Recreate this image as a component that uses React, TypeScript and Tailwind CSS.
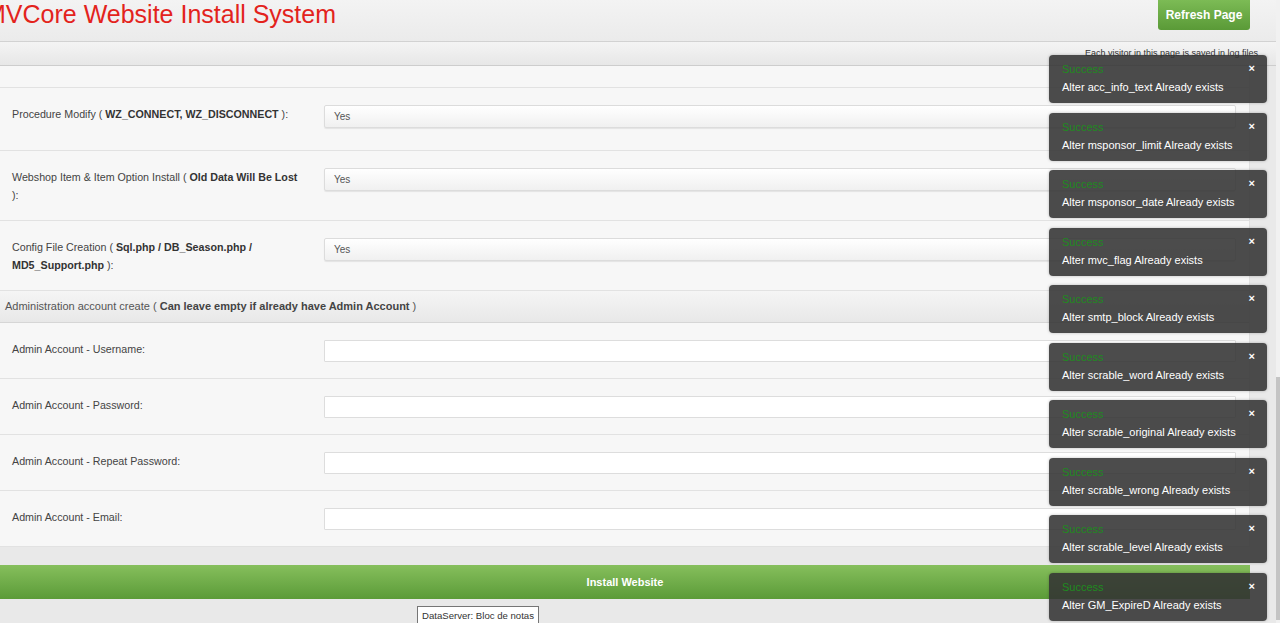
import React from "react";

const toasts = [
  "acc_info_text",
  "msponsor_limit",
  "msponsor_date",
  "mvc_flag",
  "smtp_block",
  "scrable_word",
  "scrable_original",
  "scrable_wrong",
  "scrable_level",
  "GM_ExpireD",
];

function SelectBox() {
  return (
    <div className="h-[23px] mb-[6px] flex items-center pl-[9px] text-[10px] text-[#555] bg-gradient-to-b from-[#ffffff] to-[#f0f0f0] border border-[#dcdcdc] rounded-[2px] shadow-[0_1px_1px_rgba(0,0,0,0.08)]">
      Yes
    </div>
  );
}

function InputBox() {
  return <div className="h-[22px] bg-white border border-[#dddddd] rounded-[1px]" />;
}

function Row({ label, children }: { label: React.ReactNode; children: React.ReactNode }) {
  return (
    <div className="flex pl-[12px] pr-[13px] pt-[17px] pb-[16px] border-b border-[#e2e2e2]">
      <div className="w-[291px] shrink-0 text-[10.7px] leading-[18px] text-[#444]">{label}</div>
      <div className="flex-1 ml-[21px]">{children}</div>
    </div>
  );
}

export default function App() {
  return (
    <div className="relative w-[1280px] h-[623px] overflow-hidden flex bg-[#e9e9e9] font-['Liberation_Sans',Arial,sans-serif]">
      <div className="flex-1 flex flex-col">
        {/* header */}
        <div className="h-[42px] shrink-0 flex justify-between bg-gradient-to-b from-[#f3f3f3] to-[#ebebeb] border-b border-[#d2d2d2]">
          <div className="ml-[-15px] text-[25px] leading-[28px] text-[#e3231c] whitespace-nowrap">
            MVCore Website Install System
          </div>
          <div className="mr-[26px] w-[92px] h-[30px] flex items-center justify-center rounded-b-[3px] bg-gradient-to-b from-[#7cbb55] to-[#5a9a37] text-white text-[12px] font-bold">
            Refresh Page
          </div>
        </div>
        <div className="h-[24px] shrink-0 flex items-center justify-end pr-[18px] bg-gradient-to-b from-[#f4f4f4] to-[#e7e7e7] border-b border-[#cdcdcd] text-[9px] text-[#333]">
          Each visitor in this page is saved in log files
        </div>

        {/* form panel */}
        <div className="w-[1250px] bg-[#f7f7f7] border-r border-[#e0e0e0]">
          <div className="h-[22px] border-b border-[#e2e2e2]" />
          <Row
            label={
              <>
                Procedure Modify ( <b className="text-[#333]">WZ_CONNECT, WZ_DISCONNECT</b> ):
              </>
            }
          >
            <SelectBox />
          </Row>
          <Row
            label={
              <>
                Webshop Item &amp; Item Option Install ( <b className="text-[#333]">Old Data Will Be Lost</b> ):
              </>
            }
          >
            <SelectBox />
          </Row>
          <Row
            label={
              <>
                Config File Creation ( <b className="text-[#333]">Sql.php / DB_Season.php / MD5_Support.php</b> ):
              </>
            }
          >
            <SelectBox />
          </Row>
          <div className="h-[32px] flex items-center pl-[5px] bg-gradient-to-b from-[#f5f5f5] to-[#e8e8e8] border-b border-[#d6d6d6] text-[11px] text-[#555]">
            Administration account create (&nbsp;<b className="text-[#444]">Can leave empty if already have Admin Account</b>&nbsp;)
          </div>
          <Row label="Admin Account - Username:">
            <InputBox />
          </Row>
          <Row label="Admin Account - Password:">
            <InputBox />
          </Row>
          <Row label="Admin Account - Repeat Password:">
            <InputBox />
          </Row>
          <Row label="Admin Account - Email:">
            <InputBox />
          </Row>
        </div>

        <div className="h-[18px] shrink-0" />
        <div className="w-[1250px] h-[34px] shrink-0 flex items-center justify-center bg-gradient-to-b from-[#86bf5c] to-[#5b9b38] text-white text-[11px] font-bold">
          Install Website
        </div>
      </div>

      {/* scrollbar */}
      <div className="w-[4px] shrink-0 flex flex-col bg-[#f1f1f1]">
        <div className="h-[377px]" />
        <div className="h-[243px] bg-[#c4c4c4]" />
      </div>

      {/* toasts */}
      <div className="absolute top-[55px] right-[13px] w-[218px] flex flex-col gap-[9.5px]">
        {toasts.map((t) => (
          <div
            key={t}
            className="relative h-[48px] rounded-[4px] bg-[rgba(51,51,51,0.88)] shadow-[0_0_3px_rgba(0,0,0,0.25)] pl-[13px] pt-[8px]"
          >
            <div className="text-[11px] leading-[13px] text-[#1f8a1f]">Success</div>
            <div className="mt-[4px] text-[11px] leading-[14px] text-white">Alter {t} Already exists</div>
            <div className="absolute top-[6px] right-[12px] text-[11px] leading-[14px] font-bold text-white">×</div>
          </div>
        ))}
      </div>

      {/* tooltip */}
      <div className="absolute left-[417px] top-[606px] h-[20px] px-[4px] pt-[2px] bg-white border border-[#767676] text-[9.6px] leading-[14px] text-[#333] whitespace-nowrap">
        DataServer: Bloc de notas
      </div>
    </div>
  );
}
